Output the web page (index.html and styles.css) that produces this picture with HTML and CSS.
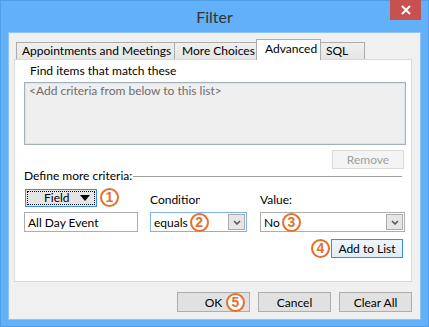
FILE: index.html
```html
<!DOCTYPE html>
<html lang="en">
<head>
  <meta charset="UTF-8" />
  <title>Filter</title>
  <link rel="stylesheet" href="styles.css">
</head>
<body>
  <div class="window">
    <div class="titlebar">
      <span></span>
      <h1 class="title">Filter</h1>
      <button class="close" aria-label="Close">
        <svg width="10" height="10" viewBox="0 0 10 10"><path d="M1 1 L9 9 M9 1 L1 9" stroke="#fff" stroke-width="2"/></svg>
      </button>
    </div>

    <div class="client">
      <div class="tabs">
        <div class="tab tab-appt">Appointments and Meetings</div>
        <div class="tab tab-more">More Choices</div>
        <div class="tab tab-adv active">Advanced</div>
        <div class="tab tab-sql">SQL</div>
      </div>

      <div class="panel">
        <div class="find-label">Find items that match these</div>
        <div class="criteria-list">&lt;Add criteria from below to this list&gt;</div>
        <div class="remove-row"><button class="btn btn-disabled">Remove</button></div>

        <div class="define"><span>Define more criteria:</span><span class="rule"></span></div>

        <div class="criteria-grid">
          <div class="field-cell">
            <button class="field-btn">
              <span class="focus-rect">
                <span class="field-text">Field</span>
                <svg width="10" height="6" viewBox="0 0 10 6"><path d="M0 0 H10 L5 6 Z" fill="#000"/></svg>
              </span>
            </button>
            <span class="step">1</span>
          </div>
          <div class="label label-cond"><span>Condition</span></div>
          <div class="label">Value:</div>

          <div class="textbox">All Day Event</div>
          <div class="combo focused">
            <span>equals</span><span class="step">2</span>
            <span class="drop"><svg width="8" height="5" viewBox="0 0 8 5"><path d="M1 1 L4 4 L7 1" fill="none" stroke="#555" stroke-width="1.5"/></svg></span>
          </div>
          <div class="combo">
            <span>No</span><span class="step">3</span>
            <span class="drop"><svg width="8" height="5" viewBox="0 0 8 5"><path d="M1 1 L4 4 L7 1" fill="none" stroke="#555" stroke-width="1.5"/></svg></span>
          </div>
        </div>

        <div class="add-row"><span class="step">4</span><button class="btn btn-default">Add to List</button></div>
      </div>

      <div class="footer">
        <button class="btn btn-ok">OK<span class="step step-over">5</span></button>
        <button class="btn">Cancel</button>
        <button class="btn">Clear All</button>
      </div>
    </div>
  </div>
</body>
</html>
```

FILE: styles.css
```css
body {
  margin: 0;
  font-family: "Segoe UI", Lato, "Noto Sans", sans-serif;
  font-size: 12px;
  color: #000;
}
.window {
  width: 429px;
  height: 327px;
  box-sizing: border-box;
  background: #62b1f8;
  border: 1px solid #4c9fe8;
  padding: 0 7px 6px;
  display: flex;
  flex-direction: column;
}
/* barre de titre */
.titlebar {
  height: 31px;
  display: grid;
  grid-template-columns: 1fr auto 1fr;
  align-items: start;
}
.title {
  margin: 0;
  font-size: 16px;
  font-weight: normal;
  color: #333;
  line-height: 31px;
}
.close {
  justify-self: end;
  width: 31px;
  height: 20px;
  margin-top: -1px;
  border: none;
  padding: 0;
  background: #c75050;
  display: flex;
  align-items: center;
  justify-content: center;
}
.client {
  flex: 1;
  background: #f0f0f0;
  border: 1px solid #8fc2ee;
  padding: 6px 8px 0 5px;
  display: flex;
  flex-direction: column;
}
/* onglets */
.tabs {
  display: flex;
  align-items: flex-end;
  height: 20px;
  padding-left: 2px;
}
.tab {
  box-sizing: border-box;
  height: 17px;
  border: 1px solid #acacac;
  border-bottom: none;
  background: linear-gradient(#f0f0f0, #e5e5e5);
  line-height: 15px;
  padding-left: 5px;
  white-space: nowrap;
}
.tab + .tab {
  margin-left: -1px;
}
.tab-appt { width: 159px; }
.tab-more { width: 84px; padding-left: 7px; }
.tab-adv { width: 65px; }
.tab-sql { width: 47px; padding-left: 7px; }
.tab.active {
  height: 21px;
  margin: 0 -2px -1px -2px;
  background: #fff;
  padding-left: 8px;
  line-height: 17px;
  z-index: 1;
}
.panel {
  box-sizing: border-box;
  height: 223px;
  background: #fff;
  border: 1px solid #d9d9d9;
  padding: 3px 5px 0 9px;
}
.find-label {
  line-height: 15px;
  padding-left: 6px;
}
.criteria-list {
  box-sizing: border-box;
  height: 63px;
  margin-top: 4px;
  background: #efefef;
  border: 1px solid #a3b1bf;
  box-shadow: inset 0 0 0 1px #d8e4ef;
  color: #6d6d6d;
  padding: 1px 4px;
  line-height: 14px;
}
.remove-row {
  display: flex;
  justify-content: flex-end;
  margin-top: 5px;
  padding-right: 2px;
}
.btn {
  box-sizing: border-box;
  width: 72px;
  height: 19px;
  font-family: inherit;
  font-size: 12px;
  padding: 0;
  border: 1px solid #adadad;
  background: #e1e1e1;
  color: #000;
}
.btn-disabled {
  background: #f4f4f4;
  border-color: #d9d9d9;
  color: #a0a0a0;
}
.btn-default {
  border-color: #3c8fe0;
  background: linear-gradient(#eef5fc, #e2ecf6);
}
.define {
  display: flex;
  align-items: center;
  line-height: 14px;
  padding-right: 4px;
}
.rule {
  flex: 1;
  height: 1px;
  background: #a0a0a0;
  margin-left: 1px;
}
/* critères */
.criteria-grid {
  display: grid;
  grid-template-columns: 114px 97px 146px;
  grid-template-rows: 20px 20px;
  column-gap: 12px;
  row-gap: 5px;
  margin-top: 4px;
}
.criteria-grid > :nth-child(3n) {
  margin-left: 1px;
}
.field-cell {
  display: flex;
  align-items: center;
  padding-left: 1px;
  margin-top: 1px;
}
.field-btn {
  box-sizing: border-box;
  width: 72px;
  height: 18px;
  padding: 1px;
  border: 1px solid #3b8ee6;
  background: #e5e5e5;
  font-family: inherit;
  font-size: 12px;
}
.focus-rect {
  display: flex;
  align-items: center;
  height: 100%;
  box-sizing: border-box;
  border: 1px dotted #000;
  padding: 0 4px 0 16px;
}
.field-text { flex: 1; text-align: left; }
.label {
  align-self: end;
  line-height: 14px;
  padding-left: 0;
}
.label-cond span {
  display: block;
  width: 50px;
  overflow: hidden;
  white-space: nowrap;
}
.textbox, .combo {
  box-sizing: border-box;
  border: 1px solid #abadb3;
  background: #fff;
  display: flex;
  align-items: center;
  padding-left: 3px;
}
.combo.focused {
  border-color: #7eb4ea;
}
.combo .step {
  margin-left: 2px;
}
.drop {
  margin-left: auto;
  width: 17px;
  height: 16px;
  box-sizing: border-box;
  margin-right: 1px;
  border: 1px solid #acacac;
  background: #e6e6e6;
  display: flex;
  align-items: center;
  justify-content: center;
}
.add-row {
  display: flex;
  justify-content: flex-end;
  align-items: center;
  margin-top: 7px;
  padding-right: 3px;
}
/* pastilles numérotées */
.step {
  box-sizing: border-box;
  width: 19px;
  height: 19px;
  border-radius: 50%;
  border: 2px solid #e5712d;
  background: #fff;
  color: #e5712d;
  font-family: "Liberation Sans", Arial, sans-serif;
  font-weight: bold;
  font-size: 14px;
  line-height: 15px;
  text-align: center;
  flex: none;
}
.field-cell .step { margin-left: 3px; }
.add-row .step { margin-right: 1px; }
.footer {
  display: flex;
  justify-content: flex-end;
  gap: 8px;
  margin-top: 10px;
  padding-right: 0;
}
.footer .btn {
  width: 73px;
  height: 20px;
}
.btn-ok {
  position: relative;
}
.step-over {
  position: absolute;
  left: 48px;
  top: 0;
}
```
